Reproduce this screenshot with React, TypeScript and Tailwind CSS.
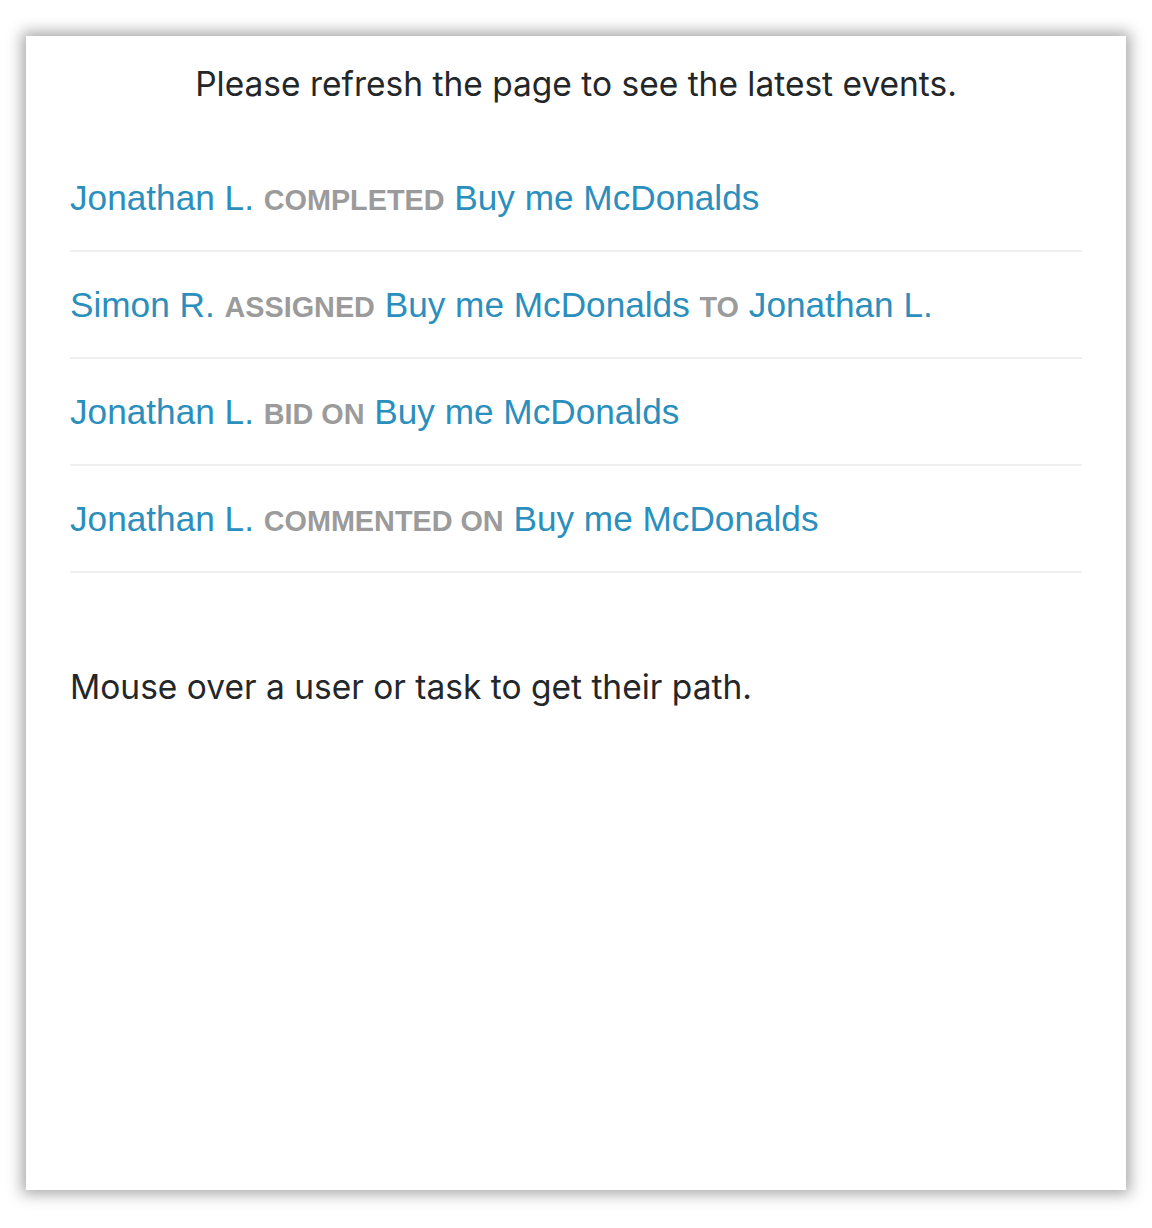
const events = [
  { parts: [["u", "Jonathan L."], ["v", "completed"], ["t", "Buy me McDonalds"]] },
  { parts: [["u", "Simon R."], ["v", "assigned"], ["t", "Buy me McDonalds"], ["v", "to"], ["u", "Jonathan L."]] },
  { parts: [["u", "Jonathan L."], ["v", "bid on"], ["t", "Buy me McDonalds"]] },
  { parts: [["u", "Jonathan L."], ["v", "commented on"], ["t", "Buy me McDonalds"]] },
]

const EventRow = ({ parts }: { parts: string[][] }) => (
  <li className="border-b-2 border-[#efefef] py-[30px] leading-[45px] text-[35.2px] font-['Liberation_Sans',Arial,sans-serif]">
    {parts.map(([kind, text], i) => (
      <span key={i}>
        {i > 0 && " "}
        {kind === "v" ? (
          <span className="text-[28.8px] leading-none font-bold uppercase text-[#9b9b9b]">{text}</span>
        ) : (
          <a className="text-[#2b8fbd] cursor-pointer">{text}</a>
        )}
      </span>
    ))}
  </li>
)

export default function App() {
  return (
    <div className="w-[1152px] h-[1228px] bg-white pt-[36px] pl-[26px]">
      <div className="w-[1100px] h-[1154px] bg-white shadow-[0_0_14px_4px_rgba(0,0,0,0.35)] px-[44px] pt-[26px] font-['Inter',sans-serif] text-[#24272a]">
        <p className="text-center text-[33.5px] leading-[44px]">
          Please refresh the page to see the latest events.
        </p>
        <ul className="mt-[39px]">
          {events.map((e, i) => (
            <EventRow key={i} parts={e.parts} />
          ))}
        </ul>
        <p className="mt-[92px] text-[33.5px] leading-[44px]">Mouse over a user or task to get their path.</p>
      </div>
    </div>
  )
}
